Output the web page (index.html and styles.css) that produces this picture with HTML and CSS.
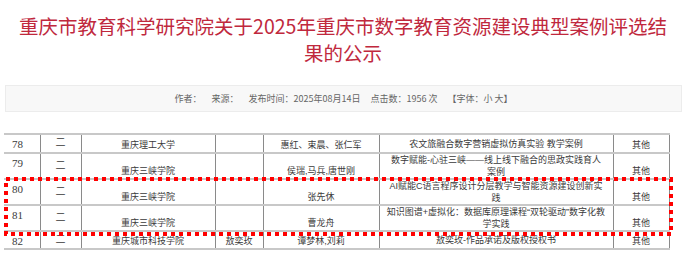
FILE: index.html
```html
<!DOCTYPE html>
<html lang="zh-CN">
<head>
<meta charset="utf-8">
<title>重庆市教育科学研究院公示</title>
<link rel="stylesheet" href="styles.css">
</head>
<body>
<div class="page">
  <h1 class="title">重庆市教育科学研究院关于2025年重庆市数字教育资源建设典型案例评选结果的公示</h1>
  <div class="info">
    <span class="item">作者：</span>
    <span class="item">来源：</span>
    <span class="item">发布时间：2025年08月14日</span>
    <span class="item">点击数：1956 次</span>
    <span class="item">【字体：小 大】</span>
  </div>
  <div class="table-wrap">
    <table class="list">
      <colgroup>
        <col class="c-no"><col class="c-lv"><col class="c-school"><col class="c-rec"><col class="c-names"><col class="c-title"><col class="c-type">
      </colgroup>
      <tr class="r20">
        <td class="no">78</td><td class="lv">二</td><td>重庆理工大学</td><td></td><td>惠红、束晨、张仁军</td><td class="tt">农文旅融合数字营销虚拟仿真实验 教学案例</td><td>其他</td>
      </tr>
      <tr class="r26">
        <td class="no">79</td><td class="lv">二</td><td>重庆三峡学院</td><td></td><td>侯瑞,马兵,唐世刚</td><td class="tt">数字赋能-心驻三峡——线上线下融合的思政实践育人<br>案例</td><td>其他</td>
      </tr>
      <tr class="r26">
        <td class="no">80</td><td class="lv">二</td><td>重庆三峡学院</td><td></td><td>张先休</td><td class="tt">AI赋能C语言程序设计分层教学与智能资源建设创新实<br>践</td><td>其他</td>
      </tr>
      <tr class="r26">
        <td class="no">81</td><td class="lv">二</td><td>重庆三峡学院</td><td></td><td>曹龙舟</td><td class="tt">知识图谱+虚拟化：数据库原理课程“双轮驱动”数字化教<br>学实践</td><td>其他</td>
      </tr>
      <tr class="r19">
        <td class="no">82</td><td class="lv">二</td><td>重庆城市科技学院</td><td>敖奕玫</td><td>谭梦林,刘莉</td><td class="tt">敖奕玫-作品承诺及版权授权书</td><td>其他</td>
      </tr>
    </table>
    <svg class="mark" width="669" height="59" viewBox="0 0 669 59">
      <rect x="2" y="2" width="665" height="55" fill="none" stroke="#ff0000" stroke-width="4" stroke-dasharray="4 4"/>
    </svg>
  </div>
</div>
</body>
</html>
```
FILE: styles.css
```css
html, body {
  margin: 0;
  padding: 0;
  background: #ffffff;
}

.page {
  padding: 12px 5px 0 4px;
  font-family: "Liberation Sans", "Noto Sans CJK SC", sans-serif;
}

.title {
  margin: 0 10px;
  font-family: "Noto Sans CJK SC", sans-serif;
  font-size: 19.5px;
  line-height: 27px;
  font-weight: 400;
  color: #c0283d;
  text-align: center;
}

.info {
  margin: 19px 0 0 1px;
  height: 25px;
  line-height: 25px;
  border: 1px solid #ececec;
  background: #f8f8f8;
  text-align: center;
  font-family: "Noto Sans CJK SC", sans-serif;
  font-size: 9px;
  color: #666666;
}

.info .item {
  margin: 0 4px;
}

.table-wrap {
  position: relative;
  margin-top: 21px;
}

.list {
  border-collapse: collapse;
  table-layout: fixed;
  width: 665px;
  font-size: 9px;
  line-height: 12px;
  color: #3a3a3a;
}

.c-no { width: 36px; }
.c-lv { width: 41px; }
.c-school { width: 134px; }
.c-rec { width: 48px; }
.c-names { width: 116px; }
.c-title { width: 234px; }
.c-type { width: 56px; }

.list td {
  padding: 0 2px 1px;
  text-align: center;
  vertical-align: bottom;
  border-top: 2px solid #c8c8c8;
  border-bottom: 2px solid #c8c8c8;
  border-left: 1px solid #8a8a8a;
  border-right: 1px solid #8a8a8a;
  white-space: nowrap;
}

.list td:first-child {
  border-left: none;
}

.list .no {
  text-align: left;
  vertical-align: top;
  padding: 3px 0 0 8px;
  font-family: "Liberation Serif", serif;
  font-size: 11px;
}

.list .lv {
  vertical-align: middle;
  font-size: 10px;
}

.list .tt {
  vertical-align: middle;
  padding-bottom: 0;
}

.r20 { height: 19px; }
.r26 { height: 25px; }
.r19 { height: 18px; }

.mark {
  position: absolute;
  left: 0;
  top: 44px;
}
```
